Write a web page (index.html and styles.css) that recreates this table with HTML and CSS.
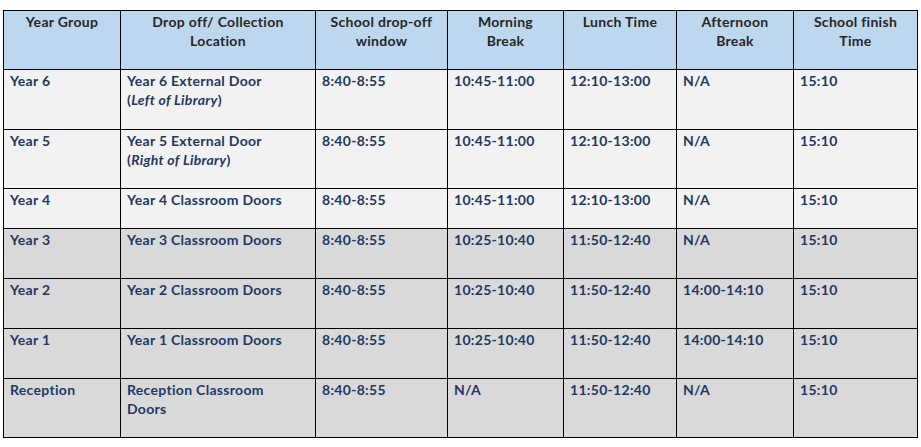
FILE: index.html
```html
<!DOCTYPE html>
<html>
<head>
<meta charset="utf-8">
<link rel="stylesheet" href="styles.css">
</head>
<body>
<table class="timetable">
  <colgroup>
    <col class="c1"><col class="c2"><col class="c3"><col class="c4"><col class="c5"><col class="c6"><col class="c7">
  </colgroup>
  <thead>
    <tr class="head">
      <th>Year Group</th>
      <th>Drop off/ Collection<br>Location</th>
      <th>School drop-off<br>window</th>
      <th>Morning<br>Break</th>
      <th>Lunch Time</th>
      <th>Afternoon<br>Break</th>
      <th>School finish<br>Time</th>
    </tr>
  </thead>
  <tbody>
    <tr class="light h60">
      <td>Year 6</td><td>Year 6 External Door<br>(<em>Left of Library</em>)</td><td>8:40-8:55</td><td>10:45-11:00</td><td>12:10-13:00</td><td>N/A</td><td>15:10</td>
    </tr>
    <tr class="light h59">
      <td>Year 5</td><td>Year 5 External Door<br>(<em>Right of Library</em>)</td><td>8:40-8:55</td><td>10:45-11:00</td><td>12:10-13:00</td><td>N/A</td><td>15:10</td>
    </tr>
    <tr class="light h40">
      <td>Year 4</td><td>Year 4 Classroom Doors</td><td>8:40-8:55</td><td>10:45-11:00</td><td>12:10-13:00</td><td>N/A</td><td>15:10</td>
    </tr>
    <tr class="dark h50">
      <td>Year 3</td><td>Year 3 Classroom Doors</td><td>8:40-8:55</td><td>10:25-10:40</td><td>11:50-12:40</td><td>N/A</td><td>15:10</td>
    </tr>
    <tr class="dark h50">
      <td>Year 2</td><td>Year 2 Classroom Doors</td><td>8:40-8:55</td><td>10:25-10:40</td><td>11:50-12:40</td><td>14:00-14:10</td><td>15:10</td>
    </tr>
    <tr class="dark h50">
      <td>Year 1</td><td>Year 1 Classroom Doors</td><td>8:40-8:55</td><td>10:25-10:40</td><td>11:50-12:40</td><td>14:00-14:10</td><td>15:10</td>
    </tr>
    <tr class="dark h59">
      <td>Reception</td><td>Reception Classroom<br>Doors</td><td>8:40-8:55</td><td>N/A</td><td>11:50-12:40</td><td>N/A</td><td>15:10</td>
    </tr>
  </tbody>
</table>
</body>
</html>
```
FILE: styles.css
```css
html, body {
  margin: 0;
  padding: 0;
  background: #ffffff;
}
body {
  font-family: Lato, "Open Sans", sans-serif;
}
.timetable {
  border-collapse: collapse;
  margin: 10px 0 0 3px;
  table-layout: fixed;
  width: 914px;
  font-size: 14px;
  letter-spacing: 0.3px;
  font-weight: 700;
  line-height: 19px;
}
.c1 { width: 117px; }
.c2 { width: 195px; }
.c3 { width: 132px; }
.c4 { width: 116px; }
.c5 { width: 113px; }
.c6 { width: 117px; }
.c7 { width: 124px; }
.timetable th,
.timetable td {
  border: 1px solid #000000;
  vertical-align: top;
  padding: 1px 6px 0 6px;
  box-sizing: border-box;
}
.timetable th {
  background: #bdd7ee;
  color: #262626;
  text-align: center;
  font-weight: 700;
  height: 59px;
}
.timetable td {
  color: #1f3864;
  text-align: left;
}
.timetable em {
  font-style: italic;
}
.light td { background: #f2f2f2; }
.dark td { background: #d9d9d9; }
.h60 td { height: 60px; }
.h59 td { height: 59px; }
.h40 td { height: 40px; }
.h50 td { height: 50px; }
```
